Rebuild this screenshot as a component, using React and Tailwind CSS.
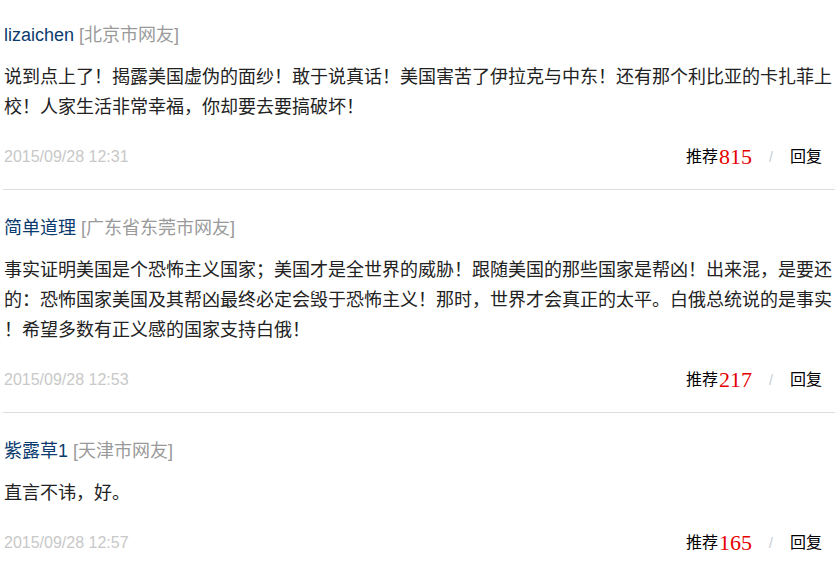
const comments = [
  {
    name: "lizaichen",
    place: "北京市网友",
    body: "说到点上了！揭露美国虚伪的面纱！敢于说真话！美国害苦了伊拉克与中东！还有那个利比亚的卡扎菲上校！人家生活非常幸福，你却要去要搞破坏！",
    time: "2015/09/28 12:31",
    likes: 815,
  },
  {
    name: "简单道理",
    place: "广东省东莞市网友",
    body: "事实证明美国是个恐怖主义国家；美国才是全世界的威胁！跟随美国的那些国家是帮凶！出来混，是要还的：恐怖国家美国及其帮凶最终必定会毁于恐怖主义！那时，世界才会真正的太平。白俄总统说的是事实！希望多数有正义感的国家支持白俄！",
    time: "2015/09/28 12:53",
    likes: 217,
  },
  {
    name: "紫露草1",
    place: "天津市网友",
    body: "直言不讳，好。",
    time: "2015/09/28 12:57",
    likes: 165,
  },
];

export default function App() {
  return (
    <div className="w-[835px] h-[570px] overflow-hidden bg-white font-['Liberation_Sans','Noto_Sans_CJK_SC',sans-serif]">
      <div className="ml-[3px]">
        {comments.map((c, i) => (
          <div
            key={i}
            className="pt-[26px] first:pt-[23px] pb-[17px] border-b border-[#dddddd]"
          >
            {/* name line */}
            <div className="pl-[1px] text-[18px] leading-[24px]">
              <span className="text-[#0b3b6e]">{c.name}</span>
              <span className="text-[#9a9a9a]"> [{c.place}]</span>
            </div>

            {/* body */}
            <p className="mt-[15px] pl-[1px] w-[832px] text-[18px] leading-[30px] text-[#222222] [line-break:anywhere]">
              {c.body}
            </p>

            {/* bottom row */}
            <div className="mt-[20px] pl-[1px] h-[30px] flex items-center justify-between pr-[13px]">
              <span className="text-[16px] text-[#c8c8c8]">{c.time}</span>
              <div className="flex items-center text-[16px] text-black">
                <span>推荐</span>
                <span className="ml-[1px] font-['Liberation_Serif',serif] text-[22px] leading-none text-[#e60000]">
                  {c.likes}
                </span>
                <span className="ml-[17px] text-[#c5cdd8] text-[14px]">/</span>
                <span className="ml-[17px]">回复</span>
              </div>
            </div>
          </div>
        ))}
      </div>
    </div>
  );
}
